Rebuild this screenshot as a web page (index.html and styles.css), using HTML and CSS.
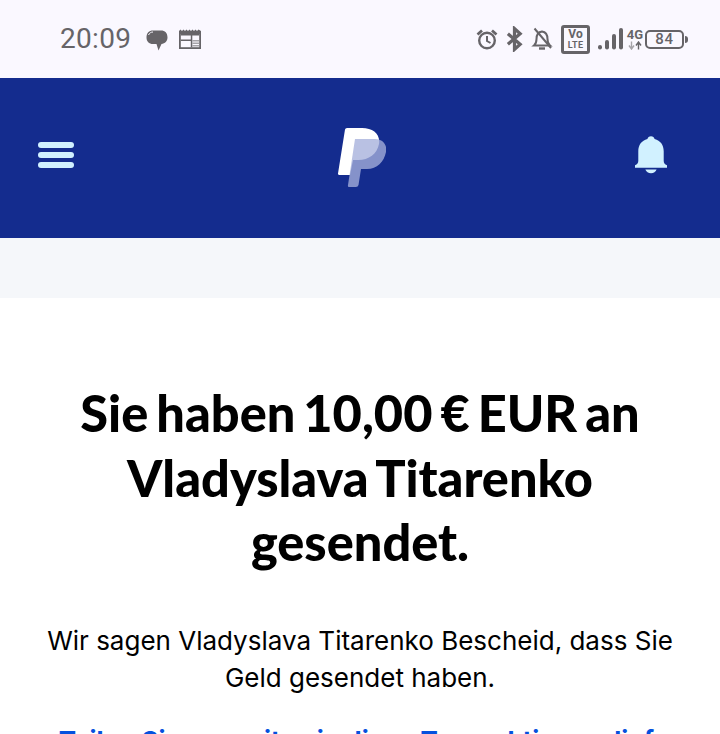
FILE: index.html
```html
<!DOCTYPE html>
<html lang="de">
<head>
<meta charset="utf-8">
<title>PayPal</title>
<link rel="stylesheet" href="styles.css">
</head>
<body>
<div class="status">
  <div class="status-left">
    <span class="time">20:09</span>
    <svg class="i-chat" viewBox="0 0 22 21"><path d="M7 0.500h8c4 0 6.500 2.500 6.500 7 0 3.500-2.500 6-6 6.500l-3 6.500-2-6.500H7C3 14 0.500 11.500 0.500 7.500 0.500 3 3 .5 7 .5z" fill="#666468"/><path d="M2.500 5c1-2 2.500-3 4.500-3" stroke="#faf8ff" stroke-width="1" fill="none"/></svg>
    <svg class="i-news" viewBox="0 0 22 20"><path d="M0 2l1.500-1.500L3 2l1.500-1.500L6 2l1.500-1.500L9 2l1.500-1.500L12 2l1.500-1.500L15 2l1.500-1.500L18 2l1.500-1.500L22 2v18H0z" fill="#666468"/><path d="M1.800 5h18.400v13.200H1.800z" fill="#faf8ff"/><path d="M1.800 5h18.400v1.500H1.800zM11.800 6.500h1.500v11.700h-1.500zM1.800 10.500h10v1.500h-10z" fill="#666468"/><path d="M13.300 11h6.900v1.500h-6.900zM13.300 13.500h6.900v1.500h-6.900zM13.300 16h6.900v1.500h-6.900z" fill="#a5a3a8"/></svg>
  </div>
  <div class="status-right">
    <svg class="i-alarm" viewBox="0 0 22 22"><circle cx="11" cy="12.500" r="7.800" fill="none" stroke="#666468" stroke-width="2.400"/><path d="M11 8v5l3.500 2" fill="none" stroke="#666468" stroke-width="2"/><path d="M1.500 6.500L6 2.500M20.500 6.500L16 2.500" stroke="#666468" stroke-width="2.800" fill="none"/></svg>
    <svg class="i-bt" viewBox="0 0 18 26"><path d="M2 7.500l13 11-6 5.500V2l6 5.500-13 11" fill="none" stroke="#666468" stroke-width="3.400"/></svg>
    <svg class="i-bell-off" viewBox="0 0 22 24"><path d="M3 18.500c1.800-1.500 2.500-3.500 2.500-6.500 0-4 2-7 5.500-7.500 3.500.5 5.500 3.500 5.500 7.500 0 3 .7 5 2.500 6.500z" fill="none" stroke="#666468" stroke-width="2"/><path d="M8 21.500h6" stroke="#666468" stroke-width="2.400"/><path d="M3.500 1.500L20 21" stroke="#666468" stroke-width="2"/></svg>
    <div class="volte"><span class="vo">Vo</span><span class="lte">LTE</span></div>
    <svg class="i-sig" viewBox="0 0 26 22"><g fill="#666468"><rect x="0" y="17" width="4" height="4.500" rx="2"/><rect x="7" y="12" width="4" height="9.500" rx="2"/><rect x="14" y="6" width="4" height="15.500" rx="2"/><rect x="21" y="0" width="4" height="21.500" rx="2"/></g></svg>
    <div class="net"><span class="net-4g">4G</span><svg class="i-arrows" viewBox="0 0 14 8"><path d="M3.500 0v6M1 4l2.500 3.500L6 4" stroke="#a5a3a8" stroke-width="1.400" fill="none"/><path d="M10.500 8V2M8 4l2.500-3.500L13 4" stroke="#666468" stroke-width="1.400" fill="none"/></svg></div>
    <div class="batt"><div class="batt-body">84</div><div class="batt-tip"></div></div>
  </div>
</div>
<header class="topbar">
  <svg class="i-menu" viewBox="0 0 36 26"><g fill="#d1f1ff"><rect x="0" y="0" width="36" height="6" rx="3"/><rect x="0" y="10" width="36" height="6" rx="3"/><rect x="0" y="20" width="36" height="6" rx="3"/></g></svg>
  <svg class="i-logo" viewBox="0 0 48 59"><path d="M7 1.500Q7.300 0 9 0H24C35 0 42.500 6 41 16 39 26 31 32 20 32H15L12 47H1.500Q-.2 47 0 45.500z" fill="#fff"/><path d="M17 11H37C44 11 49.500 16 48 24 46 34 39 41 29 41H23L20.500 57Q20 59 18 59H11Q9.500 59 10 57z" fill="#a5b0db" fill-opacity=".78"/></svg>
  <svg class="i-bell" viewBox="0 0 34 40"><path d="M17 0c2 0 3.500 1.300 3.800 3C27 4.500 30.500 9.500 30.500 16v10c0 2 1 4 3.500 5v2.500H0V31c2.500-1 3.500-3 3.500-5V16C3.500 9.500 7 4.500 13.200 3 13.500 1.300 15 0 17 0z" fill="#d1f1ff"/><path d="M11 35.500h12c-1 2.500-3.200 4-6 4s-5-1.500-6-4z" fill="#d1f1ff"/></svg>
</header>
<div class="band"></div>
<main class="content">
  <h1 class="title">Sie haben 10,00 € EUR an Vladyslava Titarenko gesendet.</h1>
  <p class="lead">Wir sagen Vladyslava Titarenko Bescheid, dass Sie Geld gesendet haben.</p>
  <a class="link" href="#">Teilen Sie uns mit, wie diese Transaktion so lief.</a>
</main>
</body>
</html>
```
FILE: styles.css
```css
* { box-sizing: border-box; }
html, body { margin: 0; padding: 0; height: 734px; overflow: hidden; background: #fff; }
body { font-family: "Inter", "Liberation Sans", sans-serif; }
.status { height: 78px; background: #faf8ff; display: flex; align-items: center; justify-content: space-between; padding: 0 32px 0 60px; }
.status-left, .status-right { display: flex; align-items: center; }
.time { font-family: "Roboto", sans-serif; font-size: 28px; font-weight: 450; color: #666468; letter-spacing: .3px; line-height: 1; }
.i-chat { width: 22px; height: 21px; margin-left: 15px; margin-top: 2px; }
.i-news { width: 22px; height: 20px; margin-left: 11px; }
.i-alarm { width: 22px; height: 22px; }
.i-bt { width: 17px; height: 26px; margin-left: 8px; }
.i-bell-off { width: 22px; height: 24px; margin-left: 8px; }
.volte { width: 29px; height: 29px; margin-left: 8px; border: 3px solid #666468; border-radius: 3px; display: flex; flex-direction: column; align-items: center; justify-content: center; gap: 1px; font-family: "Roboto", sans-serif; font-weight: 700; color: #666468; }
.vo { font-size: 12px; line-height: 11px; }
.lte { font-size: 9px; line-height: 9px; letter-spacing: .4px; }
.i-sig { width: 26px; height: 22px; margin-left: 8px; }
.net { display: flex; flex-direction: column; align-items: center; margin-left: 3px; width: 16px; }
.net-4g { font-family: "Roboto", sans-serif; font-weight: 700; font-size: 13px; line-height: 13px; color: #666468; }
.i-arrows { width: 14px; height: 9px; }
.batt { display: flex; align-items: center; margin-left: 2px; }
.batt-body { width: 39px; height: 19px; border: 2.500px solid #666468; border-radius: 5px; font-family: "Roboto", sans-serif; font-weight: 500; font-size: 15px; line-height: 14px; letter-spacing: .8px; text-align: center; color: #666468; }
.batt-tip { width: 3px; height: 7px; background: #666468; border-radius: 0 3px 3px 0; margin-left: 1px; }
.topbar { height: 160px; background: #142c8e; display: flex; align-items: center; justify-content: space-between; padding: 0 53px 0 38px; }
.i-menu { width: 36px; height: 26px; margin-bottom: 6px; }
.i-logo { width: 48px; height: 59px; margin-left: 15px; margin-bottom: 1px; }
.i-bell { width: 32px; height: 38px; margin-bottom: 6px; }
.band { height: 60px; background: #f5f7fa; }
.content { padding: 83px 40px 0; text-align: center; }
.title { margin: 0; font-family: "Lato", sans-serif; font-weight: 900; font-size: 50.500px; line-height: 64.500px; word-spacing: -4px; color: #000; }
.lead { margin: 47px 0 0; font-size: 26px; line-height: 37px; color: #000; }
.link { display: block; margin-top: 26px; font-weight: 700; font-size: 26px; line-height: 37px; color: #0551de; text-decoration: none; }
```
